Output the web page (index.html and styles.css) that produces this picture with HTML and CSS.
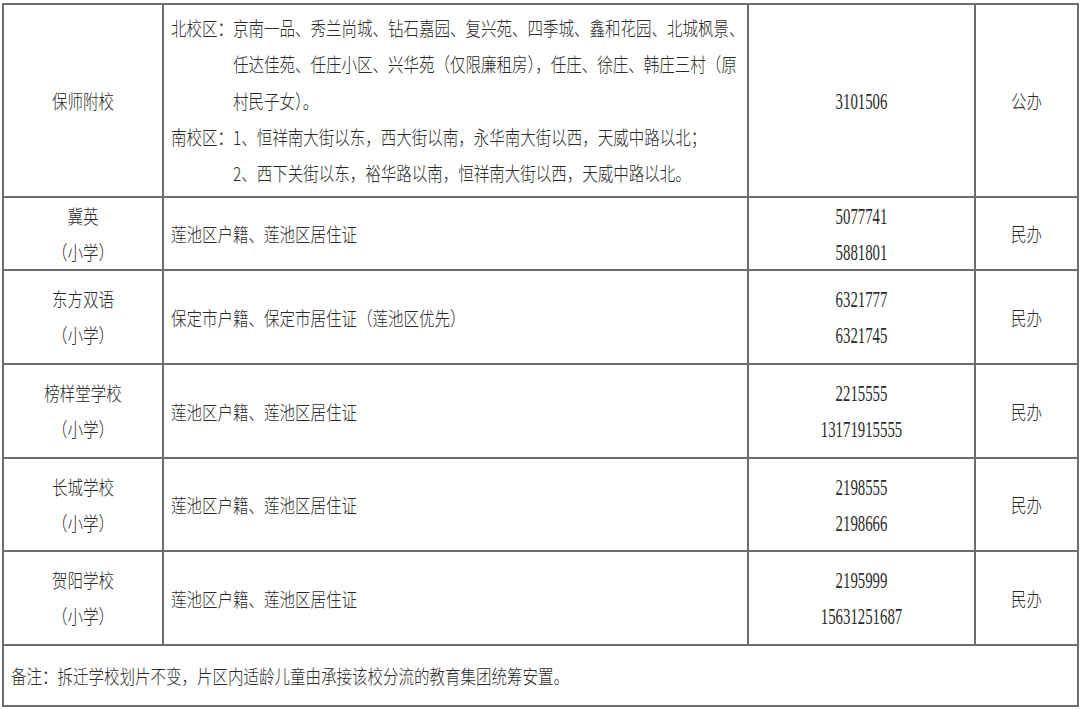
FILE: index.html
```html
<!DOCTYPE html>
<html lang="zh-CN">
<head>
<meta charset="utf-8">
<title>划片表</title>
<link rel="stylesheet" href="styles.css">
</head>
<body>
<table class="grid">
  <colgroup>
    <col class="c-name">
    <col class="c-area">
    <col class="c-phone">
    <col class="c-kind">
  </colgroup>
  <tbody>
    <tr class="r-first">
      <td class="name"><div class="t">保师附校</div></td>
      <td class="area">
        <div class="t">
          <div class="zone"><span class="zlabel">北校区：</span><span class="ztext">京南一品、秀兰尚城、钻石嘉园、复兴苑、四季城、鑫和花园、北城枫景、<br>任达佳苑、任庄小区、兴华苑（仅限廉租房），任庄、徐庄、韩庄三村（原<br>村民子女）。</span></div>
          <div class="zone"><span class="zlabel">南校区：</span><span class="ztext">1、恒祥南大街以东，西大街以南，永华南大街以西，天威中路以北；<br>2、西下关街以东，裕华路以南，恒祥南大街以西，天威中路以北。</span></div>
        </div>
      </td>
      <td class="phone"><div class="d">3101506</div></td>
      <td class="kind"><div class="t">公办</div></td>
    </tr>
    <tr class="r-small">
      <td class="name"><div class="t">冀英<br>（小学）</div></td>
      <td class="area"><div class="t">莲池区户籍、莲池区居住证</div></td>
      <td class="phone"><div class="d">5077741<br>5881801</div></td>
      <td class="kind"><div class="t">民办</div></td>
    </tr>
    <tr class="r-mid">
      <td class="name"><div class="t">东方双语<br>（小学）</div></td>
      <td class="area"><div class="t">保定市户籍、保定市居住证（莲池区优先）</div></td>
      <td class="phone"><div class="d">6321777<br>6321745</div></td>
      <td class="kind"><div class="t">民办</div></td>
    </tr>
    <tr class="r-mid">
      <td class="name"><div class="t">榜样堂学校<br>（小学）</div></td>
      <td class="area"><div class="t">莲池区户籍、莲池区居住证</div></td>
      <td class="phone"><div class="d">2215555<br>13171915555</div></td>
      <td class="kind"><div class="t">民办</div></td>
    </tr>
    <tr class="r-mid2">
      <td class="name"><div class="t">长城学校<br>（小学）</div></td>
      <td class="area"><div class="t">莲池区户籍、莲池区居住证</div></td>
      <td class="phone"><div class="d">2198555<br>2198666</div></td>
      <td class="kind"><div class="t">民办</div></td>
    </tr>
    <tr class="r-mid">
      <td class="name"><div class="t">贺阳学校<br>（小学）</div></td>
      <td class="area"><div class="t">莲池区户籍、莲池区居住证</div></td>
      <td class="phone"><div class="d">2195999<br>15631251687</div></td>
      <td class="kind"><div class="t">民办</div></td>
    </tr>
    <tr class="r-note">
      <td class="note" colspan="4"><div class="t">备注：拆迁学校划片不变，片区内适龄儿童由承接该校分流的教育集团统筹安置。</div></td>
    </tr>
  </tbody>
</table>
</body>
</html>
```

FILE: styles.css
```css
html, body {
  margin: 0;
  padding: 0;
  background: #ffffff;
}

body {
  padding: 3px 0 0 2px;
  font-family: "Noto Sans CJK SC", "Noto Sans CJK JP", sans-serif;
  font-weight: 300;
  color: #2a2a2a;
}

.grid {
  border-collapse: collapse;
  table-layout: fixed;
  width: 1076px;
}

.c-name { width: 160px; }
.c-area { width: 585px; }
.c-phone { width: 227px; }
.c-kind { width: 103px; }

.grid td {
  border: 2px solid #6e6e6e;
  padding: 0;
  vertical-align: middle;
}

.r-first { height: 193px; }
.r-small { height: 73px; }
.r-mid { height: 94px; }
.r-mid2 { height: 93px; }
.r-note { height: 61px; }

.t {
  font-size: 15.5px;
  line-height: 29px;
  transform: scaleY(1.25);
  transform-origin: 50% 50%;
}

.name, .kind {
  text-align: center;
}

.area {
  padding-left: 7px !important;
  text-align: left;
}

.zone {
  display: flex;
}

.zlabel {
  flex: 0 0 59px;
  white-space: nowrap;
}

.ztext {
  flex: 1 1 auto;
  white-space: nowrap;
}

.phone {
  text-align: center;
}

.d {
  font-family: "Liberation Serif", serif;
  font-weight: 400;
  font-size: 14.8px;
  line-height: 24px;
  transform: scaleY(1.5);
  transform-origin: 50% 50%;
  color: #2a2a2a;
}

.note {
  padding-left: 7px !important;
}
```
